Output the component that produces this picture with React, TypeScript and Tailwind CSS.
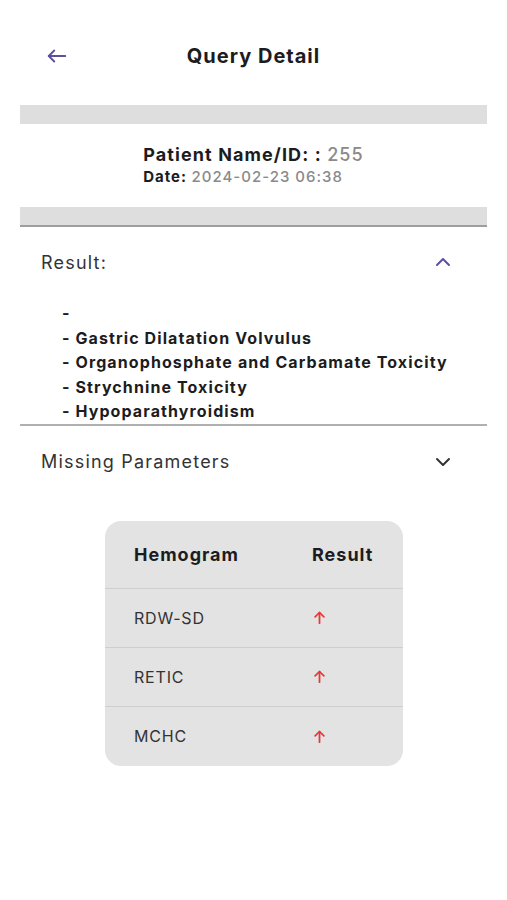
import React from "react";

const font = { fontFamily: "Inter, 'Noto Sans', sans-serif" };

function BackArrow() {
  return (
    <svg width="22" height="22" viewBox="0 0 24 24" fill="none" stroke="#5b4fa0" strokeWidth="2" strokeLinecap="round" strokeLinejoin="round">
      <path d="M21 12H3" />
      <path d="M9 6l-6 6 6 6" />
    </svg>
  );
}

function Chevron({ up, color }: { up?: boolean; color: string }) {
  return (
    <svg width="18" height="18" viewBox="0 0 24 24" fill="none" stroke={color} strokeWidth="2.6" strokeLinecap="round" strokeLinejoin="round">
      {up ? <path d="M4 16l8-8 8 8" /> : <path d="M4 8l8 8 8-8" />}
    </svg>
  );
}

function UpArrow() {
  return (
    <svg width="15" height="15" viewBox="0 0 24 24" fill="none" stroke="#e53935" strokeWidth="2.8" strokeLinecap="round" strokeLinejoin="round">
      <path d="M12 21V4" />
      <path d="M5 11l7-7 7 7" />
    </svg>
  );
}

export default function App() {
  const items = [
    "",
    "Gastric Dilatation Volvulus",
    "Organophosphate and Carbamate Toxicity",
    "Strychnine Toxicity",
    "Hypoparathyroidism",
  ];
  const rows = ["RDW-SD", "RETIC", "MCHC"];
  return (
    <div className="w-[507px] h-[900px] bg-white text-[#1c1c1e]" style={font}>
      <div className="relative h-[56px] mt-[28px] flex items-center justify-center">
        <div className="absolute left-[46px] top-[17px]">
          <BackArrow />
        </div>
        <div className="text-[20px] font-bold tracking-[1px]">Query Detail</div>
      </div>
      <div className="mx-[20px] mt-[21px] h-[19px] bg-[#dedede]" />
      <div className="flex justify-center pt-[19px] pb-[21px]">
        <div className="flex flex-col">
          <div className="text-[18px] leading-[24px] font-bold tracking-[1.1px]">
            Patient Name/ID: : <span className="font-medium text-[#8a8a8a]">255</span>
          </div>
          <div className="text-[15px] leading-[19px] font-bold tracking-[1px]">
            Date: <span className="font-medium text-[#8a8a8a]">2024-02-23 06:38</span>
          </div>
        </div>
      </div>
      <div className="mx-[20px] h-[20px] bg-[#dedede] border-b-2 border-[#9e9e9e]" />
      <div className="mx-[20px] h-[70px] flex items-center justify-between pl-[21px] pr-[35px]">
        <div className="text-[18px] text-[#333] tracking-[1.2px]">Result:</div>
        <Chevron up color="#5b4fa0" />
      </div>
      <div className="pl-[62px] pt-[4px] flex flex-col">
        {items.map((t, i) => (
          <div key={i} className="text-[16px] leading-[24.5px] font-bold tracking-[1.1px] h-[24.5px]">
            - {t}
          </div>
        ))}
      </div>
      <div className="mx-[20px] h-[2px] bg-[#b0b0b0]" />
      <div className="mx-[20px] h-[72px] flex items-center justify-between pl-[21px] pr-[35px]">
        <div className="text-[18px] text-[#333] tracking-[1.2px]">Missing Parameters</div>
        <Chevron color="#333" />
      </div>
      <div className="flex justify-center mt-[23px]">
        <div className="w-[298px] ml-[1px] bg-[#e3e3e3] rounded-[16px] overflow-hidden">
          <div className="h-[68px] flex items-center border-b border-[#cfcfcf]">
            <div className="w-[207px] pl-[29px] text-[18px] font-bold tracking-[1px]">Hemogram</div>
            <div className="text-[18px] font-bold tracking-[1px]">Result</div>
          </div>
          {rows.map((r, i) => (
            <div key={r} className={"h-[59px] flex items-center" + (i < rows.length - 1 ? " border-b border-[#cfcfcf]" : "")}>
              <div className="w-[207px] pl-[29px] text-[16px] text-[#333] tracking-[0.8px]">{r}</div>
              <UpArrow />
            </div>
          ))}
        </div>
      </div>
    </div>
  );
}
